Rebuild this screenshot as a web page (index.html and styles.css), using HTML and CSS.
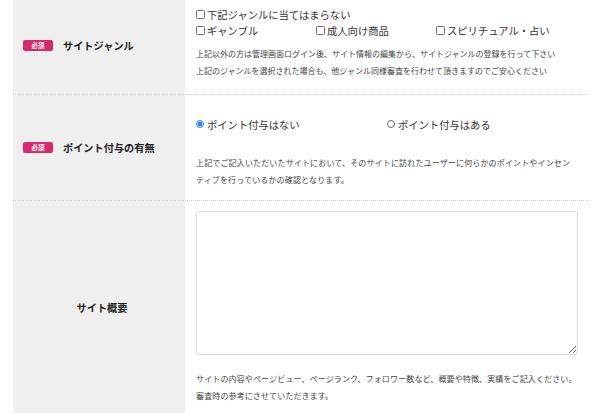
FILE: index.html
```html
<!DOCTYPE html>
<html lang="ja">
<head>
<meta charset="utf-8">
<link rel="stylesheet" href="styles.css">
</head>
<body>
<div class="form">
  <div class="row row-genre">
    <div class="th"><span class="badge">必須</span><span class="label">サイトジャンル</span></div>
    <div class="td">
      <div class="checks">
        <label class="opt full"><span class="box"></span>下記ジャンルに当てはまらない</label>
        <label class="opt"><span class="box"></span>ギャンブル</label>
        <label class="opt"><span class="box"></span>成人向け商品</label>
        <label class="opt"><span class="box"></span>スピリチュアル・占い</label>
      </div>
      <p class="note">上記以外の方は管理画面ログイン後、サイト情報の編集から、サイトジャンルの登録を行って下さい<br>上記のジャンルを選択された場合も、他ジャンル同様審査を行わせて頂きますのでご安心ください</p>
    </div>
  </div>
  <div class="row row-point">
    <div class="th"><span class="badge">必須</span><span class="label">ポイント付与の有無</span></div>
    <div class="td">
      <div class="radios">
        <label class="opt"><span class="radio on"></span>ポイント付与はない</label>
        <label class="opt"><span class="radio"></span>ポイント付与はある</label>
      </div>
      <p class="note">上記でご記入いただいたサイトにおいて、そのサイトに訪れたユーザーに何らかのポイントやインセンティブを行っているかの確認となります。</p>
    </div>
  </div>
  <div class="row row-summary">
    <div class="th center"><span class="label">サイト概要</span></div>
    <div class="td">
      <textarea class="area"></textarea>
      <p class="note">サイトの内容やページビュー、ページランク、フォロワー数など、概要や特徴、実績をご記入ください。<br>審査時の参考にさせていただきます。</p>
    </div>
  </div>
</div>
</body>
</html>
```

FILE: styles.css
```css
* { box-sizing: border-box; }
html, body { margin: 0; padding: 0; background: #fff; }
body {
  font-family: "Noto Sans CJK JP", "Noto Sans", sans-serif;
  color: #333;
  overflow: hidden;
}
.form {
  margin-left: 13px;
  width: 575px;
}
.row {
  display: flex;
  border-bottom: 1px dotted #cfcfcf;
}
.th {
  width: 172px;
  flex: none;
  background: #efefef;
  display: flex;
  align-items: center;
  padding-left: 10px;
}
.th.center { justify-content: center; padding-left: 6px; }
.row-genre .th { padding-bottom: 3px; }
.badge {
  display: inline-block;
  width: 30px;
  height: 11px;
  line-height: 11px;
  border-radius: 2px;
  background: #d72a6e;
  color: #fff;
  font-size: 6.5px;
  font-weight: 700;
  text-align: center;
  margin-right: 10px;
}
.label {
  font-size: 10.2px;
  font-weight: 700;
  color: #222;
}
.td {
  flex: 1;
  padding: 0 10px 0 11px;
}
.row-genre .td { padding-top: 6px; padding-bottom: 15px; }
.row-point .td { padding-top: 21px; padding-bottom: 12px; }
.row-summary .td { padding-top: 10px; padding-bottom: 10px; }
.checks {
  display: grid;
  grid-template-columns: 120px 120px 120px;
}
.checks .full { grid-column: 1 / -1; }
.radios {
  display: grid;
  grid-template-columns: 1fr 1fr;
}
.opt {
  display: flex;
  align-items: center;
  height: 16px;
  font-size: 10.3px;
  color: #333;
  white-space: nowrap;
}
.box {
  width: 9px;
  height: 9px;
  border: 1px solid #707070;
  border-radius: 1.5px;
  margin-right: 2px;
  flex: none;
}
.radio {
  width: 8px;
  height: 8px;
  border: 1px solid #6a6a6a;
  border-radius: 50%;
  margin-right: 3px;
  flex: none;
}
.radio.on {
  border-color: #2f7fe6;
  background: radial-gradient(circle, #2f7fe6 0 2.2px, #fff 2.6px);
}
.note {
  margin: 7px 0 0;
  font-size: 8px;
  line-height: 17px;
  color: #444;
  line-break: loose;
}
.row-point .note { margin-top: 22px; letter-spacing: 0.15px; }
.row-summary .note { margin-top: 15px; letter-spacing: 0.13px; }
.area {
  display: block;
  width: 382px;
  height: 144px;
  border: 1px solid #dcdcdc;
  border-radius: 3px;
  background: #fff;
  margin: 0;
  resize: both;
}
```
